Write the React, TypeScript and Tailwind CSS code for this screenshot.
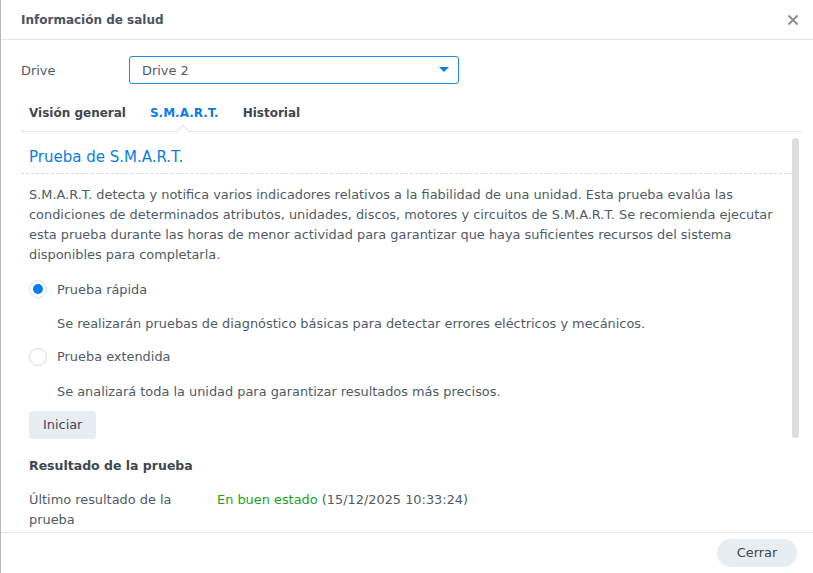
import { useState } from 'react';

const FONT = { fontFamily: '"DejaVu Sans", Verdana, sans-serif' };

function Radio({ checked, onClick }: { checked: boolean; onClick: () => void }) {
  return (
    <button
      onClick={onClick}
      className={`w-[18px] h-[18px] rounded-full border flex items-center justify-center bg-white ${
        checked ? 'border-[#cfe3f7]' : 'border-[#d5dae0]'
      }`}
    >
      {checked && <span className="w-[10px] h-[10px] rounded-full bg-[#0a7de6]" />}
    </button>
  );
}

export default function App() {
  const [mode, setMode] = useState<'quick' | 'extended'>('quick');

  return (
    <div style={FONT} className="w-[813px] h-[573px] bg-white border-l border-[#b4b8bd] flex flex-col text-[12.9px] text-[#505b66] overflow-hidden">
      {/* encabezado */}
      <div className="h-[40px] shrink-0 flex items-center justify-between pl-[20px] pr-[14px] border-b border-[#e2e6ea]">
        <span className="font-bold text-[12px] text-[#4b5561]">Información de salud</span>
        <svg width="12" height="12" viewBox="0 0 12 12" className="text-[#8a9099]">
          <path d="M1.5 1.5 L10.5 10.5 M10.5 1.5 L1.5 10.5" stroke="currentColor" strokeWidth="2" />
        </svg>
      </div>

      <div className="flex items-center pl-[20px] mt-[16px]">
        <span className="w-[108px] pt-[2px]">Drive</span>
        <div className="w-[330px] h-[28px] border border-[#1a8ae8] rounded-[3px] flex items-center justify-between pl-[12px] pr-[9px]">
          <span className="pt-[1px]">Drive 2</span>
          <svg width="10" height="6" viewBox="0 0 10 6">
            <path d="M0 0 H10 L5 5 Z" fill="#0a7de6" />
          </svg>
        </div>
      </div>

      {/* pestañas */}
      <div className="ml-[20px] mr-[12px] mt-[20px] relative border-b border-[#dfe4e8] flex gap-[24px] pl-[8px] h-[28px] items-start font-bold text-[12px]">
        <span className="text-[#3f4751]">Visión general</span>
        <span className="text-[#0a7de6]">S.M.A.R.T.</span>
        <span className="text-[#3f4751]">Historial</span>
        <span className="absolute left-[157px] bottom-[-6px] w-[10px] h-[10px] bg-white border-l border-t border-[#dfe4e8] rotate-45" />
      </div>

      <div className="flex-1 flex min-h-0">
        <div className="flex-1 pl-[20px] min-w-0">
          <div className="border-b border-dashed border-[#d6dee4] pl-[8px] pt-[14px] pb-[4px] text-[15px] text-[#0a7de6]">
            Prueba de S.M.A.R.T.
          </div>
          <div className="pl-[8px]">
            <p className="mt-[11px] leading-[20px]">
              S.M.A.R.T. detecta y notifica varios indicadores relativos a la fiabilidad de una unidad. Esta prueba evalúa las condiciones de determinados atributos, unidades, discos, motores y circuitos de S.M.A.R.T. Se recomienda ejecutar esta prueba durante las horas de menor actividad para garantizar que haya suficientes recursos del sistema disponibles para completarla.
            </p>

            <div className="flex items-center gap-[10px] mt-[15px]">
              <Radio checked={mode === 'quick'} onClick={() => setMode('quick')} />
              <span>Prueba rápida</span>
            </div>
            <p className="pl-[28px] mt-[15px]">Se realizarán pruebas de diagnóstico básicas para detectar errores eléctricos y mecánicos.</p>

            <div className="flex items-center gap-[10px] mt-[14px]">
              <Radio checked={mode === 'extended'} onClick={() => setMode('extended')} />
              <span>Prueba extendida</span>
            </div>
            <p className="pl-[28px] mt-[15px]">Se analizará toda la unidad para garantizar resultados más precisos.</p>

            <button className="mt-[10px] h-[28px] px-[14px] rounded-[3px] bg-[#e8edf4] text-[#3f4751]">Iniciar</button>

            <div className="font-bold text-[12.5px] text-[#3f4751] mt-[18px]">Resultado de la prueba</div>
            <div className="flex mt-[14px] leading-[20px]">
              <span className="w-[188px] shrink-0 pr-[10px]">Último resultado de la prueba</span>
              <span>
                <span className="text-[#1aa31a]">En buen estado</span> (15/12/2025 10:33:24)
              </span>
            </div>
          </div>
        </div>
        <div className="w-[21px] shrink-0 pt-[6px] pb-[94px]">
          <div className="w-[7px] h-full rounded-full bg-[#dddddd]" />
        </div>
      </div>

      {/* pie */}
      <div className="h-[41px] shrink-0 border-t border-[#e2e6ea] flex items-center justify-end pr-[16px]">
        <button className="h-[28px] w-[80px] rounded-full bg-[#e8edf4] text-[#3f4751]">Cerrar</button>
      </div>
    </div>
  );
}
